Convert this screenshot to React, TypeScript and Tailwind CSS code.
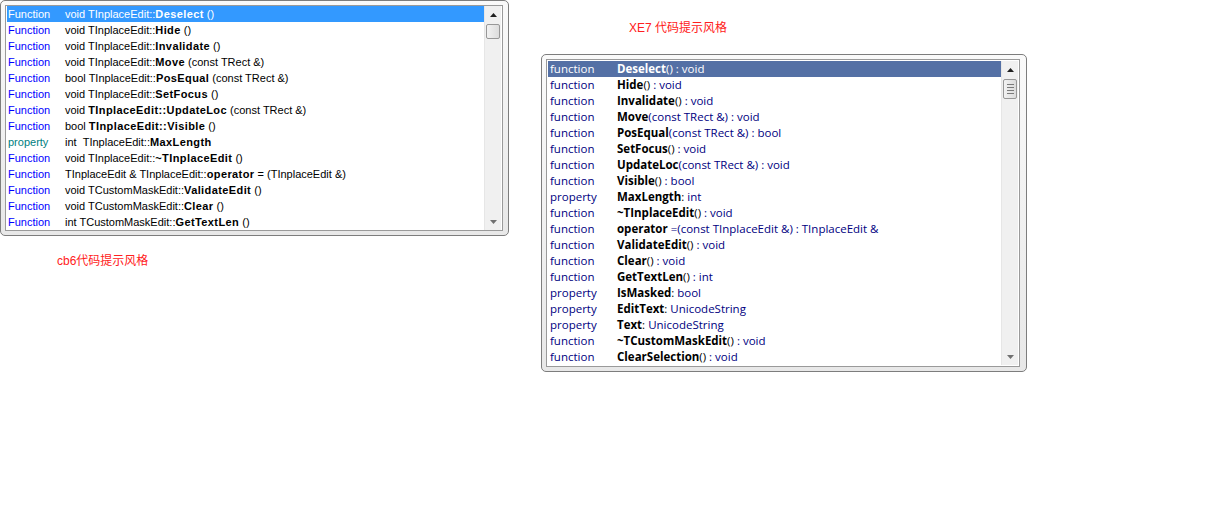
import React from 'react';

type Seg = { t: string; b?: boolean; c?: string };
type Row = { kind: string; segs: Seg[] };

const cb6Rows: Row[] = [
  { kind: 'Function', segs: [{ t: 'void TInplaceEdit::' }, { t: 'Deselect', b: true }, { t: ' ()' }] },
  { kind: 'Function', segs: [{ t: 'void TInplaceEdit::' }, { t: 'Hide', b: true }, { t: ' ()' }] },
  { kind: 'Function', segs: [{ t: 'void TInplaceEdit::' }, { t: 'Invalidate', b: true }, { t: ' ()' }] },
  { kind: 'Function', segs: [{ t: 'void TInplaceEdit::' }, { t: 'Move', b: true }, { t: ' (const TRect &)' }] },
  { kind: 'Function', segs: [{ t: 'bool TInplaceEdit::' }, { t: 'PosEqual', b: true }, { t: ' (const TRect &)' }] },
  { kind: 'Function', segs: [{ t: 'void TInplaceEdit::' }, { t: 'SetFocus', b: true }, { t: ' ()' }] },
  { kind: 'Function', segs: [{ t: 'void ' }, { t: 'TInplaceEdit::UpdateLoc', b: true }, { t: ' (const TRect &)' }] },
  { kind: 'Function', segs: [{ t: 'bool ' }, { t: 'TInplaceEdit::Visible', b: true }, { t: ' ()' }] },
  { kind: 'property', segs: [{ t: 'int\u00a0\u00a0TInplaceEdit::' }, { t: 'MaxLength', b: true }] },
  { kind: 'Function', segs: [{ t: 'void TInplaceEdit::' }, { t: '~TInplaceEdit', b: true }, { t: ' ()' }] },
  { kind: 'Function', segs: [{ t: 'TInplaceEdit & TInplaceEdit::' }, { t: 'operator', b: true }, { t: ' = (TInplaceEdit &)' }] },
  { kind: 'Function', segs: [{ t: 'void TCustomMaskEdit::' }, { t: 'ValidateEdit', b: true }, { t: ' ()' }] },
  { kind: 'Function', segs: [{ t: 'void TCustomMaskEdit::' }, { t: 'Clear', b: true }, { t: ' ()' }] },
  { kind: 'Function', segs: [{ t: 'int TCustomMaskEdit::' }, { t: 'GetTextLen', b: true }, { t: ' ()' }] },
];

const N = '#000080';

const xe7Rows: Row[] = [
  { kind: 'function', segs: [{ t: 'Deselect', b: true }, { t: '()' }, { t: ' : void', c: N }] },
  { kind: 'function', segs: [{ t: 'Hide', b: true }, { t: '()' }, { t: ' : void', c: N }] },
  { kind: 'function', segs: [{ t: 'Invalidate', b: true }, { t: '()' }, { t: ' : void', c: N }] },
  { kind: 'function', segs: [{ t: 'Move', b: true }, { t: '(const TRect &) : void', c: N }] },
  { kind: 'function', segs: [{ t: 'PosEqual', b: true }, { t: '(const TRect &) : bool', c: N }] },
  { kind: 'function', segs: [{ t: 'SetFocus', b: true }, { t: '()' }, { t: ' : void', c: N }] },
  { kind: 'function', segs: [{ t: 'UpdateLoc', b: true }, { t: '(const TRect &) : void', c: N }] },
  { kind: 'function', segs: [{ t: 'Visible', b: true }, { t: '()' }, { t: ' : bool', c: N }] },
  { kind: 'property', segs: [{ t: 'MaxLength', b: true }, { t: ':' }, { t: ' int', c: N }] },
  { kind: 'function', segs: [{ t: '~TInplaceEdit', b: true }, { t: '()' }, { t: ' : void', c: N }] },
  { kind: 'function', segs: [{ t: 'operator', b: true }, { t: ' =(const TInplaceEdit &) : TInplaceEdit &', c: N }] },
  { kind: 'function', segs: [{ t: 'ValidateEdit', b: true }, { t: '()' }, { t: ' : void', c: N }] },
  { kind: 'function', segs: [{ t: 'Clear', b: true }, { t: '()' }, { t: ' : void', c: N }] },
  { kind: 'function', segs: [{ t: 'GetTextLen', b: true }, { t: '()' }, { t: ' : int', c: N }] },
  { kind: 'property', segs: [{ t: 'IsMasked', b: true }, { t: ':' }, { t: ' bool', c: N }] },
  { kind: 'property', segs: [{ t: 'EditText', b: true }, { t: ':' }, { t: ' UnicodeString', c: N }] },
  { kind: 'property', segs: [{ t: 'Text', b: true }, { t: ':' }, { t: ' UnicodeString', c: N }] },
  { kind: 'function', segs: [{ t: '~TCustomMaskEdit', b: true }, { t: '()' }, { t: ' : void', c: N }] },
  { kind: 'function', segs: [{ t: 'ClearSelection', b: true }, { t: '()' }, { t: ' : void', c: N }] },
];

const UpArrow = ({ color }: { color: string }) => (
  <svg width="7" height="4" viewBox="0 0 7 4">
    <path d="M3.5 0 L7 4 L0 4 Z" fill={color} />
  </svg>
);

const DownArrow = ({ color }: { color: string }) => (
  <svg width="7" height="4" viewBox="0 0 7 4">
    <path d="M0 0 L7 0 L3.5 4 Z" fill={color} />
  </svg>
);

const Scrollbar = ({ thumbH, grip }: { thumbH: number; grip?: boolean }) => (
  <div className="flex w-[17px] shrink-0 flex-col bg-[#f0f0f0] border-l border-[#e6e6e6]">
    <div className="flex h-[17px] items-center justify-center">
      <UpArrow color="#202020" />
    </div>
    <div className="flex-1 px-[1px] pt-[1px]">
      <div
        className="flex flex-col items-center justify-center gap-[2px] rounded-[2px] border border-[#979797] bg-gradient-to-r from-[#f2f2f2] to-[#dcdcdc]"
        style={{ height: thumbH }}
      >
        {grip && (
          <>
            <div className="h-px w-[7px] bg-[#7a7a7a]" />
            <div className="h-px w-[7px] bg-[#7a7a7a]" />
            <div className="h-px w-[7px] bg-[#7a7a7a]" />
            <div className="h-px w-[7px] bg-[#7a7a7a]" />
          </>
        )}
      </div>
    </div>
    <div className="flex h-[17px] items-center justify-center">
      <DownArrow color="#707070" />
    </div>
  </div>
);

const Cb6Popup = () => (
  <div className="w-[509px] rounded-[5px] border border-[#7d7d7d] bg-gradient-to-b from-[#fafafa] to-[#e8e8e8] p-[4px] pr-[5px]">
    <div className="flex border border-[#9a9a9a] bg-white px-px">
      <div className="flex-1" style={{ fontFamily: '"Liberation Sans", Tahoma, sans-serif' }}>
        {cb6Rows.map((r, i) => {
          const sel = i === 0;
          return (
            <div
              key={i}
              className={`flex h-[16px] items-center whitespace-nowrap text-[11px] leading-[16px] ${sel ? 'bg-[#3399ff] text-white' : 'text-black'}`}
            >
              <span
                className={`w-[58px] shrink-0 pl-[1px] ${sel ? '' : r.kind === 'property' ? 'text-[#008080]' : 'text-[#0000ff]'}`}
              >
                {r.kind}
              </span>
              <span>
                {r.segs.map((s, j) => (
                  <span key={j} className={s.b ? 'font-bold tracking-[0.4px]' : ''}>
                    {s.t}
                  </span>
                ))}
              </span>
            </div>
          );
        })}
      </div>
      <Scrollbar thumbH={15} />
    </div>
  </div>
);

const Xe7Popup = () => (
  <div className="w-[486px] rounded-[5px] border border-[#7d7d7d] bg-gradient-to-b from-[#fafafa] to-[#e8e8e8] p-[4px] pr-[6px]">
    <div className="flex border border-[#9a9a9a] bg-white p-px">
      <div className="flex-1" style={{ fontFamily: '"Segoe UI", "Open Sans", sans-serif' }}>
        {xe7Rows.map((r, i) => {
          const sel = i === 0;
          return (
            <div
              key={i}
              className={`flex h-[16px] items-center whitespace-nowrap text-[11.5px] leading-[16px] ${sel ? 'bg-[#5470a5] text-white' : 'text-black'}`}
            >
              <span className={`w-[69px] shrink-0 pl-[2px] ${sel ? '' : 'text-[#000080]'}`}>{r.kind}</span>
              <span>
                {r.segs.map((s, j) => (
                  <span
                    key={j}
                    className={s.b ? 'font-bold' : ''}
                    style={!sel && s.c ? { color: s.c } : undefined}
                  >
                    {s.t}
                  </span>
                ))}
              </span>
            </div>
          );
        })}
      </div>
      <Scrollbar thumbH={20} grip />
    </div>
  </div>
);

export default function App() {
  return (
    <div className="h-[510px] w-[1232px] bg-white">
      <div className="flex items-start">
        <div className="flex flex-col">
          <Cb6Popup />
          <div
            className="mt-[18px] pl-[57px] text-[12px] leading-[14px] text-[#ff2020]"
            style={{ fontFamily: '"Liberation Sans", "Noto Sans CJK SC", sans-serif' }}
          >
            cb6代码提示风格
          </div>
        </div>
        <div className="ml-[32px] flex flex-col">
          <div
            className="mt-[21px] pl-[88px] text-[12px] leading-[14px] text-[#ff2020]"
            style={{ fontFamily: '"Liberation Sans", "Noto Sans CJK SC", sans-serif' }}
          >
            XE7 代码提示风格
          </div>
          <div className="mt-[19px]">
            <Xe7Popup />
          </div>
        </div>
      </div>
    </div>
  );
}
